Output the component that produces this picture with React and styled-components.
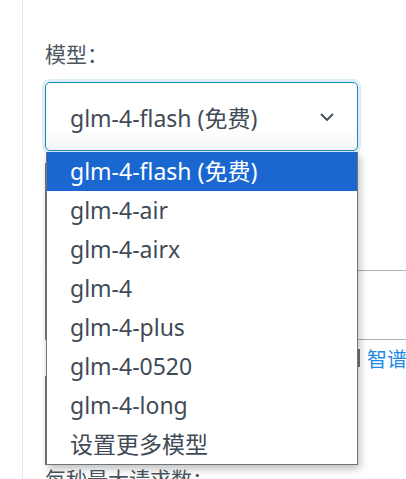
import React, { useState } from "react";
import styled, { createGlobalStyle } from "styled-components";

const GlobalStyle = createGlobalStyle`
  html, body {
    margin: 0;
    padding: 0;
    background: #ffffff;
    font-family: "Noto Sans", "Noto Sans CJK SC", sans-serif;
    overflow: hidden;
  }
`;

const Page = styled.div`
  width: 406px;
  height: 479px;
  overflow: hidden;
  padding-left: 22px;
  box-sizing: border-box;
`;

const Panel = styled.div`
  border-left: 1px solid #e6e8ea;
  height: 100%;
  padding: 40px 0 0 22px;
  box-sizing: border-box;
`;

const Label = styled.div`
  font-size: 21px;
  line-height: 28px;
  color: #4b5661;
  white-space: nowrap;
  margin-bottom: ${(p) => p.$gap ?? 14}px;
`;

const SelectWrap = styled.div`
  position: relative;
  width: 313px;
`;

const SelectBox = styled.div`
  height: 69px;
  border: 1px solid #1b8cb9;
  border-radius: 5px;
  box-shadow: 0 0 0 3px #dcedf4;
  background: linear-gradient(#ffffff 70%, #f4f4f4);
  display: flex;
  align-items: center;
  justify-content: space-between;
  padding: 0 22px 0 24px;
  box-sizing: border-box;
  font-size: 23px;
  color: #3f4b56;
`;

const Menu = styled.ul`
  position: absolute;
  top: 70px;
  left: 1px;
  width: 312px;
  margin: 0;
  padding: 0;
  list-style: none;
  background: #ffffff;
  border: 1px solid #6f7479;
  border-top: none;
  box-shadow: 2px 4px 8px rgba(0, 0, 0, 0.25);
  z-index: 2;
  box-sizing: border-box;
`;

const Item = styled.li`
  height: 39px;
  line-height: 39px;
  padding-left: 23px;
  font-size: 23px;
  white-space: nowrap;
  color: ${(p) => (p.$active ? "#ffffff" : "#3f4b56")};
  background: ${(p) => (p.$active ? "#1a67d2" : "transparent")};
`;

const Behind = styled.div`
  display: flex;
  flex-direction: column;
  width: 362px;
`;

const InputLine = styled.div`
  height: ${(p) => p.$h}px;
  border-left: 2px solid #6d757c;
  border-bottom: ${(p) => (p.$line ? "1px solid #a9b3bb" : "none")};
  margin-top: ${(p) => p.$mt || 0}px;
`;

const LinkRow = styled.div`
  display: flex;
  justify-content: flex-end;
  align-items: center;
  gap: 7px;
  height: 36px;
  font-size: 20px;
  color: #1e88e5;
  white-space: nowrap;
`;

const Bar = styled.span`
  width: 2px;
  height: 18px;
  background: #6d757c;
`;

const Chevron = () => (
  <svg width="16" height="10" viewBox="0 0 16 10" fill="none">
    <path d="M2 2l6 6 6-6" stroke="#3f4b56" strokeWidth="1.8" />
  </svg>
);

const options = [
  "glm-4-flash (免费)",
  "glm-4-air",
  "glm-4-airx",
  "glm-4",
  "glm-4-plus",
  "glm-4-0520",
  "glm-4-long",
  "设置更多模型",
];

export default function App() {
  const [active] = useState(0);
  return (
    <Page>
      <GlobalStyle />
      <Panel>
        <Label>模型：</Label>
        <SelectWrap>
          <SelectBox>
            <span>{options[active]}</span>
            <Chevron />
          </SelectBox>
          <Menu>
            {options.map((o, i) => (
              <Item key={o} $active={i === active}>
                {o}
              </Item>
            ))}
          </Menu>
          <Behind>
            <InputLine $h={60} $mt={12} />
            <InputLine $h={47} $line />
            <InputLine $h={68} $line />
            <LinkRow>
              <Bar />
              <span>智谱</span>
            </LinkRow>
            <InputLine $h={89} />
          </Behind>
        </SelectWrap>
        <Label $gap={0}>每秒最大请求数：</Label>
      </Panel>
    </Page>
  );
}
